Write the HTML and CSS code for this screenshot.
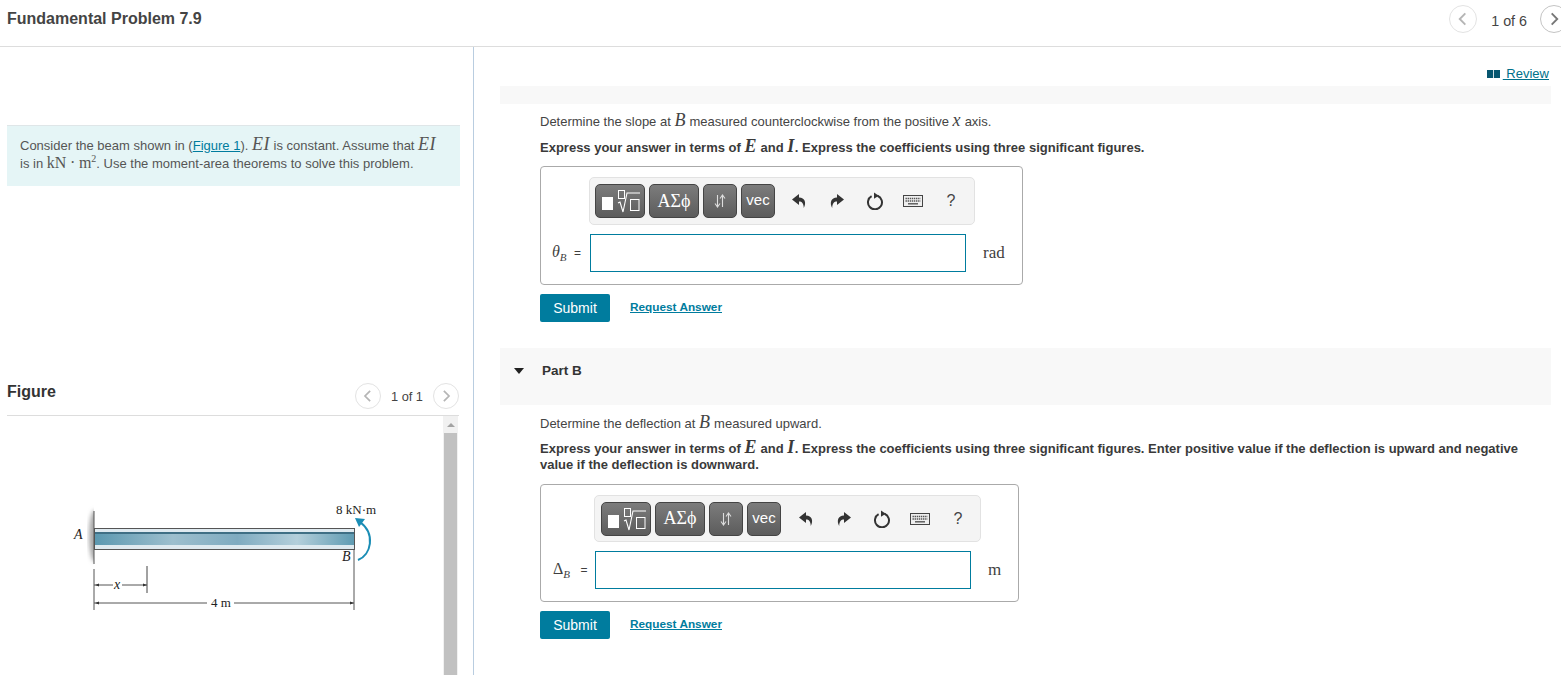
FILE: index.html
```html
<!DOCTYPE html>
<html lang="en">
<head>
    <meta charset="UTF-8">
    <title>Fundamental Problem 7.9</title>
    <link rel="stylesheet" href="styles.css">
</head>
<body>
    <svg class="defs" width="0" height="0">
        <symbol id="i-prev" viewBox="0 0 28 28"><path d="M16.5 8 L10.5 14 L16.5 20" fill="none" stroke="#b5b5b5" stroke-width="2"/></symbol>
        <symbol id="i-next" viewBox="0 0 28 28"><path d="M11.5 8 L17.5 14 L11.5 20" fill="none" stroke="#777" stroke-width="2"/></symbol>
        <symbol id="i-next-off" viewBox="0 0 28 28"><path d="M11.5 8 L17.5 14 L11.5 20" fill="none" stroke="#b5b5b5" stroke-width="2"/></symbol>
        <symbol id="i-undo" viewBox="0 0 16 16"><path d="M8 1 L1 6.5 L8 12 V8.6 C11 8.6 12.6 10.5 12.8 15 C15.6 10 14 4.6 8 4.6 Z" fill="#333"/></symbol>
        <symbol id="i-redo" viewBox="0 0 16 16"><path d="M8 1 L15 6.5 L8 12 V8.6 C5 8.6 3.4 10.5 3.2 15 C0.4 10 2 4.6 8 4.6 Z" fill="#333"/></symbol>
        <symbol id="i-reset" viewBox="0 0 18 18"><path d="M5.6 4.2 A7 7 0 1 0 11.5 3.8" fill="none" stroke="#333" stroke-width="2"/><path d="M8 0.6 L12.8 3.8 L8 6.8 Z" fill="#333"/></symbol>
        <symbol id="i-keys" viewBox="0 0 20 12"><rect x="0.5" y="0.5" width="19" height="11" fill="#eee" stroke="#444"/><path d="M2.5 3.5 H17.5 M2.5 6 H17.5" stroke="#555" stroke-width="1.4" stroke-dasharray="1.4 0.7"/><path d="M5 8.8 H15" stroke="#555" stroke-width="1.4"/></symbol>
        <symbol id="i-math" viewBox="0 0 50 34"><rect x="7" y="13" width="11" height="13" fill="#fff"/><rect x="23.5" y="6.5" width="6" height="8" fill="none" stroke="#fff"/><path d="M23 19 L25 18 L28 28 L32 9 H45" fill="none" stroke="#fff" stroke-width="1.1"/><rect x="35.5" y="15.5" width="8.5" height="11" fill="none" stroke="#fff"/></symbol>
        <symbol id="i-sort" viewBox="0 0 14 16"><path d="M4.5 2 V13 M2 10.5 L4.5 14 L7 10.5 M9.5 14 V3 M7 5.5 L9.5 2 L12 5.5" fill="none" stroke="#ddd" stroke-width="1.1"/></symbol>
    </svg>

    <header class="top-bar">
        <div class="top-title">Fundamental Problem 7.9</div>
        <div class="pager top-pager">
            <span class="pager-btn"><svg><use href="#i-prev"/></svg></span>
            <span class="pager-text">1 of 6</span>
            <span class="pager-btn pager-btn-on"><svg><use href="#i-next"/></svg></span>
        </div>
    </header>

    <div class="main">
        <section class="left">
            <div class="intro">
                Consider the beam shown in (<a href="#">Figure 1</a>). <i class="math mi">EI</i> is constant. Assume that <i class="math mi">EI</i><br>
                is in <span class="math">kN</span> <span class="math">·</span> <span class="math">m<sup>2</sup></span>. Use the moment-area theorems to solve this problem.
            </div>

            <div class="figure-head">
                <div class="figure-title">Figure</div>
                <div class="pager">
                    <span class="pager-btn small"><svg><use href="#i-prev"/></svg></span>
                    <span class="pager-text">1 of 1</span>
                    <span class="pager-btn small"><svg><use href="#i-next-off"/></svg></span>
                </div>
            </div>

            <div class="figure-body">
                <svg class="beam" width="436" height="259" viewBox="0 0 436 259">
                    <defs>
                        <linearGradient id="steel" x1="0" x2="1" y1="0" y2="0">
                            <stop offset="0" stop-color="#5b98b0"/>
                            <stop offset="0.3" stop-color="#9dbfce"/>
                            <stop offset="0.55" stop-color="#7fabc0"/>
                            <stop offset="0.78" stop-color="#b4cfdb"/>
                            <stop offset="1" stop-color="#5f9bb2"/>
                        </linearGradient>
                        <filter id="soft"><feGaussianBlur stdDeviation="2"/></filter>
                        <clipPath id="wall-side"><rect x="70" y="85" width="17" height="70"/></clipPath>
                    </defs>
                    <g clip-path="url(#wall-side)">
                        <ellipse cx="88" cy="120" rx="6" ry="26" fill="#a8a8a8" filter="url(#soft)"/>
                    </g>
                    <path d="M87 95 V148 M87 153 V194 M347 134 V194 M87 169 H106 M115 169 H140 M87 187 H200 M227 187 H347" stroke="#555" fill="none"/>
                    <path d="M140 150 V177" stroke="#444" fill="none"/>
                    <rect x="87.5" y="112.5" width="260" height="21" fill="#dfeaf0" stroke="#555"/>
                    <rect x="88" y="116" width="259" height="2" fill="#3f6f85"/>
                    <rect x="88" y="118" width="259" height="11" fill="url(#steel)"/>
                    <path d="M88 169 l4 -1.5 v3 Z M140 169 l-4 -1.5 v3 Z M88 187 l4 -1.5 v3 Z M347 187 l-4 -1.5 v3 Z" fill="#333"/>
                    <path d="M351 144 C364 139 369 118 353 106" fill="none" stroke="#1a8db5" stroke-width="2"/>
                    <path d="M348 102 L358 103 L352 111 Z" fill="#1a8db5"/>
                    <text class="fig-label" x="329" y="98">8 kN·m</text>
                    <text class="fig-label fig-italic" x="67" y="123">A</text>
                    <text class="fig-label fig-italic" x="335" y="145">B</text>
                    <text class="fig-label fig-italic" x="107" y="173">x</text>
                    <text class="fig-label" x="204" y="191">4 m</text>
                </svg>
                <div class="scrollbar">
                    <div class="scroll-arrow"></div>
                    <div class="scroll-thumb"></div>
                </div>
            </div>
        </section>

        <section class="right">
            <div class="review-line"><a href="#"><span class="book"></span> Review</a></div>
            <div class="part-bar part-bar-a"></div>

            <div class="part-body">
                <p class="prompt">Determine the slope at <i class="math mi">B</i> measured counterclockwise from the positive <i class="math mi">x</i> axis.</p>
                <p class="prompt strong">Express your answer in terms of <i class="math mi">E</i> and <i class="math mi">I</i>. Express the coefficients using three significant figures.</p>

                <div class="answer-box box-a">
                    <div class="toolbar">
                        <span class="tool-btn w-math"><svg width="50" height="34"><use href="#i-math"/></svg></span>
                        <span class="tool-btn w-math greek">ΑΣϕ</span>
                        <span class="tool-btn w-small"><svg width="14" height="16"><use href="#i-sort"/></svg></span>
                        <span class="tool-btn w-small vec">vec</span>
                        <span class="tool-icons">
                            <span class="tool-icon"><svg width="16" height="16"><use href="#i-undo"/></svg></span>
                            <span class="tool-icon"><svg width="16" height="16"><use href="#i-redo"/></svg></span>
                            <span class="tool-icon"><svg width="18" height="18"><use href="#i-reset"/></svg></span>
                            <span class="tool-icon"><svg width="20" height="12"><use href="#i-keys"/></svg></span>
                            <span class="tool-icon help">?</span>
                        </span>
                    </div>
                    <div class="answer-row">
                        <span class="answer-label"><i class="math">θ<sub>B</sub></i> <span class="eq">=</span></span>
                        <span class="answer-input"></span>
                        <span class="answer-unit math">rad</span>
                    </div>
                </div>

                <div class="actions">
                    <span class="submit">Submit</span>
                    <a class="request" href="#">Request Answer</a>
                </div>
            </div>

            <div class="part-bar part-bar-b">
                <span class="triangle"></span>
                <span class="part-name">Part B</span>
            </div>

            <div class="part-body part-body-b">
                <p class="prompt">Determine the deflection at <i class="math mi">B</i> measured upward.</p>
                <p class="prompt strong tight">Express your answer in terms of <i class="math mi">E</i> and <i class="math mi">I</i>. Express the coefficients using three significant figures. Enter positive value if the deflection is upward and negative<br>value if the deflection is downward.</p>

                <div class="answer-box box-b">
                    <div class="toolbar">
                        <span class="tool-btn w-math"><svg width="50" height="34"><use href="#i-math"/></svg></span>
                        <span class="tool-btn w-math greek">ΑΣϕ</span>
                        <span class="tool-btn w-small"><svg width="14" height="16"><use href="#i-sort"/></svg></span>
                        <span class="tool-btn w-small vec">vec</span>
                        <span class="tool-icons">
                            <span class="tool-icon"><svg width="16" height="16"><use href="#i-undo"/></svg></span>
                            <span class="tool-icon"><svg width="16" height="16"><use href="#i-redo"/></svg></span>
                            <span class="tool-icon"><svg width="18" height="18"><use href="#i-reset"/></svg></span>
                            <span class="tool-icon"><svg width="20" height="12"><use href="#i-keys"/></svg></span>
                            <span class="tool-icon help">?</span>
                        </span>
                    </div>
                    <div class="answer-row">
                        <span class="answer-label"><span class="math">Δ<sub><i>B</i></sub></span> <span class="eq">=</span></span>
                        <span class="answer-input"></span>
                        <span class="answer-unit math">m</span>
                    </div>
                </div>

                <div class="actions">
                    <span class="submit">Submit</span>
                    <a class="request" href="#">Request Answer</a>
                </div>
            </div>
        </section>
    </div>
</body>
</html>
```

FILE: styles.css
```css
html, body {
    margin: 0;
    padding: 0;
    height: 675px;
    overflow: hidden;
}

body {
    font-family: "Liberation Sans", Arial, sans-serif;
    font-size: 13px;
    color: #3f3f3f;
    background-color: #fff;
}

a {
    color: #007c9e;
}

.defs {
    position: absolute;
}

.math {
    font-family: "Liberation Serif", "Times New Roman", serif;
    font-size: 16px;
    line-height: 0;
}

.math sup {
    font-size: 10px;
    line-height: 0;
}

.math sub {
    font-size: 11px;
    line-height: 0;
}

.mi {
    font-size: 18px;
    letter-spacing: 0.5px;
}

/* top bar */
.top-bar {
    height: 46px;
    border-bottom: 1px solid #ddd;
    display: flex;
    justify-content: space-between;
    padding-left: 7px;
    overflow: hidden;
}

.top-title {
    font-size: 16px;
    font-weight: bold;
    color: #444;
    line-height: 37px;
}

.pager {
    display: flex;
    align-items: center;
}

.top-pager {
    height: 37px;
    margin-right: -7px;
}

.pager-btn {
    width: 26px;
    height: 26px;
    border: 1px solid #e3e3e3;
    border-radius: 50%;
    display: block;
    flex-shrink: 0;
}

.pager-btn svg {
    width: 100%;
    height: 100%;
    display: block;
}

.pager-btn-on {
    border-color: #c4c4c4;
}

.pager-btn.small {
    width: 24px;
    height: 24px;
}

.pager-text {
    font-size: 14.3px;
    color: #444;
    margin: 0 13px 0 14px;
    padding-top: 4px;
}

.figure-head .pager-text {
    font-size: 12.8px;
    margin: 0 10px;
    padding-top: 0;
}

/* columns */
.main {
    display: flex;
    height: 628px;
}

.left {
    width: 466px;
    border-right: 1px solid #b9cde0;
    flex-shrink: 0;
    padding-left: 7px;
}

.intro {
    width: 453px;
    height: 61px;
    margin-top: 78px;
    box-sizing: border-box;
    border-top: 1px solid #dfe6e8;
    background-color: #e5f5f6;
    padding: 11px 13px 0;
    line-height: 18px;
    color: #555;
}

.figure-head {
    margin-top: 197px;
    width: 452px;
    height: 32px;
    display: flex;
    justify-content: space-between;
    align-items: flex-start;
    border-bottom: 1px solid #ddd;
}

.figure-title {
    font-size: 16px;
    font-weight: bold;
    color: #333;
    line-height: 18px;
}

.figure-body {
    display: flex;
    width: 451px;
    height: 260px;
    overflow: hidden;
}

.beam {
    display: block;
    flex-shrink: 0;
}

.fig-label {
    font-family: "Liberation Serif", serif;
    font-size: 13px;
    fill: #222;
}

.fig-italic {
    font-style: italic;
    font-size: 14px;
}

.scrollbar {
    width: 15px;
    background-color: #f1f1f1;
    display: flex;
    flex-direction: column;
    align-items: center;
}

.scroll-arrow {
    margin-top: 7px;
    margin-bottom: 6px;
    border-left: 4px solid transparent;
    border-right: 4px solid transparent;
    border-bottom: 4px solid #a3a3a3;
}

.scroll-thumb {
    width: 13px;
    flex: 1;
    background-color: #c1c1c1;
}

/* right column */
.right {
    flex: 1;
    padding: 0 10px 0 26px;
    min-width: 0;
}

.review-line {
    height: 39px;
    text-align: right;
    padding-right: 2px;
    box-sizing: border-box;
    padding-top: 20px;
    line-height: 14px;
}

.review-line a {
    color: #00708a;
}

.book {
    display: inline-block;
    width: 13px;
    height: 8px;
    margin-right: 3px;
    background: linear-gradient(to right, #07566f 0 6px, #cfdde2 6px 7px, #07566f 7px);
}

.part-bar {
    background-color: #f8f8f8;
}

.part-bar-a {
    height: 18px;
}

.part-bar-b {
    height: 57px;
    display: flex;
    align-items: flex-start;
}

.triangle {
    margin: 20px 0 0 14px;
    border-left: 5px solid transparent;
    border-right: 5px solid transparent;
    border-top: 6px solid #222;
}

.part-name {
    margin: 15px 0 0 18px;
    font-size: 13.5px;
    font-weight: bold;
    color: #333;
    line-height: 16px;
}

.part-body {
    padding-left: 40px;
    height: 244px;
}

.part-body-b {
    height: 270px;
}

.prompt {
    margin: 0;
    padding-top: 9px;
    line-height: 17px;
    color: #444;
}

.part-body-b .prompt {
    padding-top: 10px;
}

.prompt + .prompt {
    padding-top: 9px;
}

.part-body-b .prompt + .prompt {
    padding-top: 9px;
}

.strong {
    font-weight: bold;
    color: #3a3a3a;
}

.tight {
    line-height: 16px;
}

.answer-box {
    box-sizing: border-box;
    border: 1px solid #aaa;
    border-radius: 4px;
    margin-top: 10px;
}

.box-a {
    width: 483px;
    height: 119px;
    padding: 10px 0 0 48px;
}

.box-b {
    width: 479px;
    height: 118px;
    padding: 10px 0 0 53px;
    margin-top: 11px;
}

.toolbar {
    box-sizing: border-box;
    width: 386px;
    height: 48px;
    display: flex;
    align-items: center;
    gap: 4px;
    padding-left: 5px;
    background-color: #f4f4f4;
    border: 1px solid #e2e2e2;
    border-radius: 5px;
}

.box-b .toolbar {
    width: 387px;
    height: 47px;
    padding-left: 6px;
}

.tool-btn {
    box-sizing: border-box;
    height: 34px;
    display: flex;
    align-items: center;
    justify-content: center;
    color: #fff;
    background: linear-gradient(#7c7c7c, #5c5c5c);
    border: 1px solid #444;
    border-radius: 5px;
}

.tool-btn svg {
    flex-shrink: 0;
}

.w-math {
    width: 50px;
}

.w-small {
    width: 34px;
}

.greek {
    font-family: "Liberation Serif", "DejaVu Serif", serif;
    font-size: 18px;
}

.vec {
    font-size: 15px;
    padding-bottom: 3px;
}

.tool-icons {
    display: flex;
    margin-left: 1px;
}

.box-b .tool-icons {
    margin-left: 2px;
}

.tool-icon {
    width: 38px;
    height: 34px;
    display: flex;
    align-items: center;
    justify-content: center;
}

.help {
    font-size: 16px;
    color: #444;
}

.answer-row {
    display: flex;
    align-items: center;
    margin-top: 9px;
    height: 38px;
    margin-left: -37px;
}

.answer-label {
    width: 38px;
    font-size: 12px;
    white-space: nowrap;
}

.eq {
    margin-left: 4px;
}

.box-b .eq {
    margin-left: 7px;
}

.answer-input {
    box-sizing: border-box;
    width: 376px;
    height: 38px;
    border: 1px solid #007c9e;
    background-color: #fff;
}

.answer-unit {
    margin-left: 17px;
    font-size: 17px;
    line-height: normal;
}

.box-b .answer-row {
    margin-left: -41px;
}

.box-b .answer-label {
    width: 42px;
}

.actions {
    display: flex;
    align-items: center;
    margin-top: 9px;
}

.submit {
    width: 70px;
    height: 28px;
    line-height: 28px;
    text-align: center;
    color: #fff;
    font-size: 14px;
    background-color: #007c9e;
    border-radius: 2px;
}

.request {
    margin: 0 0 3px 20px;
    font-weight: bold;
    font-size: 11.8px;
}
```
